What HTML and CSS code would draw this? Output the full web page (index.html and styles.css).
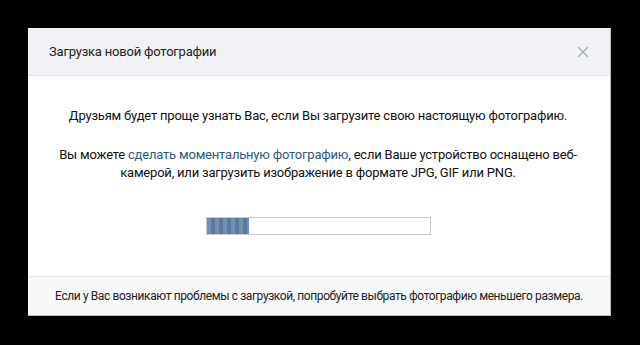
FILE: index.html
```html
<!DOCTYPE html>
<html lang="ru">
<head>
    <meta charset="UTF-8">
    <title>Загрузка новой фотографии</title>
    <link rel="stylesheet" href="styles.css">
</head>
<body>
    <div class="box">
        <div class="box-head">
            <div class="box-title">Загрузка новой фотографии</div>
            <div class="box-close">
                <svg width="12" height="12" viewBox="0 0 12 12"><path d="M1 1 L11 11 M11 1 L1 11" stroke="#a3acb8" stroke-width="1.4" fill="none"/></svg>
            </div>
        </div>
        <div class="box-body">
            <p class="info">Друзьям будет проще узнать Вас, если Вы загрузите свою настоящую фотографию.</p>
            <p class="info">Вы можете <a href="#">сделать моментальную фотографию</a>, если Ваше устройство оснащено веб-<wbr>камерой, или загрузить изображение в формате JPG, GIF или PNG.</p>
            <div class="progress"><div class="progress-bar" style="width: 42px;"></div></div>
        </div>
        <div class="box-foot">Если у Вас возникают проблемы с загрузкой, попробуйте выбрать фотографию меньшего размера.</div>
    </div>
</body>
</html>
```
FILE: styles.css
```css
body {
    margin: 0;
    padding: 28px 0 0 28px;
    background-color: #000;
    font-family: Roboto, "Liberation Sans", sans-serif;
    font-size: 13px;
    letter-spacing: -0.2px;
    color: #000;
    height: 345px;
    box-sizing: border-box;
}
.box {
    width: 583px;
    background-color: #fff;
    border-right: 1px solid #b8bcc2;
    box-sizing: border-box;
}
.box-head {
    height: 48px;
    background-color: #f0f2f5;
    border-bottom: 1px solid #e3e5e9;
    box-sizing: border-box;
    display: flex;
    align-items: center;
    justify-content: space-between;
    padding: 0 21px 0 21px;
}
.box-title {
    color: #222;
    font-size: 13px;
}
.box-close {
    display: flex;
    align-items: center;
}
.box-body {
    height: 200px;
    box-sizing: border-box;
    padding: 31px 20px 0 18px;
    text-align: center;
    display: flex;
    flex-direction: column;
}
.info {
    margin: 0 0 21px 0;
    line-height: 18px;
    color: #111;
}
.info + .info {
    margin-bottom: 35px;
}
.info a {
    color: #2a5885;
    text-decoration: none;
}
.progress {
    width: 225px;
    height: 18px;
    margin: 0 auto;
    border: 1px solid #c5c8cc;
    box-sizing: border-box;
    text-align: left;
}
.progress-bar {
    height: 100%;
    background-color: #5f81a8;
    background-image: repeating-linear-gradient(90deg, rgba(255,255,255,0.12) 0 4px, rgba(0,0,0,0.06) 4px 8px);
}
.box-foot {
    height: 40px;
    background-color: #f7f8fa;
    border-top: 1px solid #e3e5e9;
    border-bottom: 1px solid #b8bcc2;
    box-sizing: border-box;
    display: flex;
    align-items: center;
    justify-content: center;
    font-size: 12px;
    letter-spacing: -0.4px;
    color: #222;
}
```
